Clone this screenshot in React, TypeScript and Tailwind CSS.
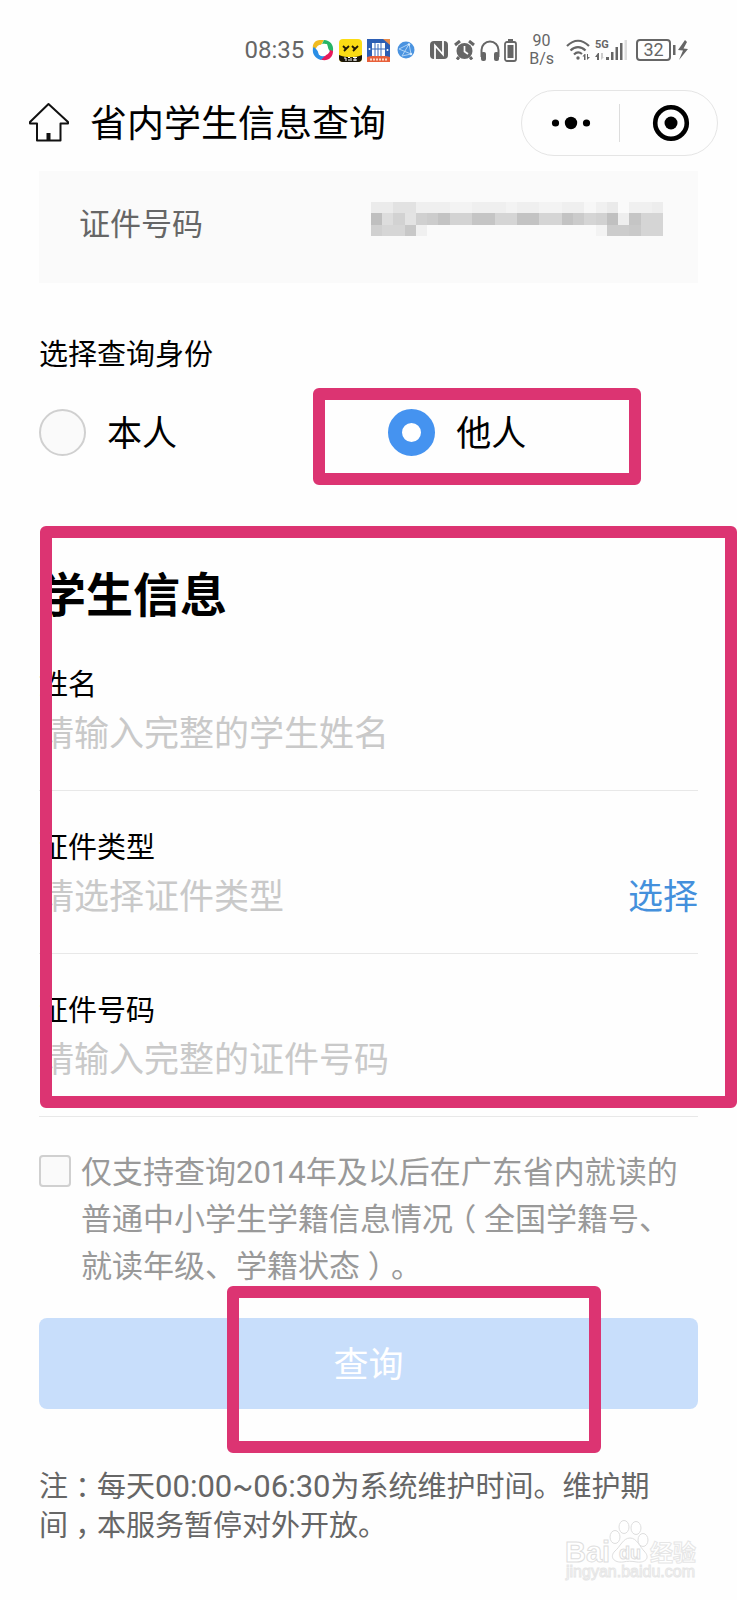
import { useState, type ReactNode } from "react";

const MASK_TOP = ["#ebebeb", "#ebebeb", "#e2e2e2", "#e2e2e2", "#efefef", "#efefef", "#efefef", "#f3f3f3", "#f3f3f3", "#efefef", "#efefef", "#efefef", "#f3f3f3", "#efefef", "#efefef", "#f3f3f3", "#f3f3f3", "#efefef", "#efefef", "#f7f7f7", "#f0f0f0", "#eaeaea", "#fafafa", "#f0f0f0", "#f0f0f0", "#ededed"];
const MASK_MIDDLE = ["#bfbfbf", "#dddddd", "#d2d2d2", "#e3e3e3", "#d0d0d0", "#cccccc", "#c3c3c3", "#d3d3d3", "#d3d3d3", "#c5c5c5", "#c5c5c5", "#d5d5d5", "#d5d5d5", "#c3c3c3", "#c3c3c3", "#d5d5d5", "#d5d5d5", "#c3c3c3", "#cbcbcb", "#d5d5d5", "#d1d1d1", "#c0c0c0", "#eeeeee", "#c5c5c5", "#d5d5d5", "#d5d5d5"];
const MASK_BOTTOM = ["#d0d0d0", "#d6d6d6", "#d6d6d6", "#c8c8c8", "#f0f0f0", "#fafafa", "#fafafa", "#fafafa", "#fafafa", "#fafafa", "#fafafa", "#fafafa", "#fafafa", "#fafafa", "#fafafa", "#fafafa", "#fafafa", "#fafafa", "#fafafa", "#fafafa", "#f3f3f3", "#cccccc", "#cccccc", "#c9c9c9", "#d5d5d5", "#d5d5d5"];

function MaskedNumber() {
  return (
    <svg className="mb-3" width="292" height="34" viewBox="0 0 260 30" preserveAspectRatio="none" shapeRendering="crispEdges" role="img" aria-label="证件号码">
      {[MASK_TOP, MASK_MIDDLE, MASK_BOTTOM].map((row, y) =>
        row.map((fill, x) => <rect key={`${x}-${y}`} x={x * 10} y={y * 10} width="10" height="10" fill={fill} />),
      )}
    </svg>
  );
}

function AppIcons() {
  return (
    <div className="flex items-center gap-[5px]">
      <svg width="22" height="22" viewBox="0 0 22 22">
        <path d="M1 10C0 5 3 1 8 1H12L9 6C5 6 4 9 3 12Z" fill="#f0bb21" />
        <path d="M12 1C18 1 22 6 21 12L20 14L15 9C16 6 14 4 10 5Z" fill="#27b566" />
        <path d="M21 12C21 18 17 22 10 21L8 20L14 16C17 15 18 12 18 11Z" fill="#e8195a" />
        <path d="M9 21C3 19 0 15 1 9L2 8L7 13C7 17 9 18 13 17Z" fill="#2a8ee6" />
        <path d="M7 6L15 5L17 12L13 17L7 16L5 10Z" fill="#fff" />
      </svg>
      <svg width="23" height="23" viewBox="0 0 23 23">
        <rect width="23" height="23" rx="4" fill="#fbdc14" />
        <path d="M0 16C7 19 16 19 23 16V19A4 4 0 0 1 19 23H4A4 4 0 0 1 0 19Z" fill="#1b1608" />
        <path d="M4 7L7 10L10 7M7 10L5 12M13 7L16 10L19 7M16 10L14 12" fill="none" stroke="#221a05" strokeWidth="1.8" />
        <path d="M5 19h2v3M9 18.500h2M9 21h2M12 19v3M14 18.500h4M14 21h4M16 18v4" fill="none" stroke="#fff" strokeWidth="1" />
      </svg>
      <svg width="23" height="23" viewBox="0 0 23 23">
        <rect width="23" height="23" fill="#2d5fb4" />
        <path d="M16 0H23V6Z" fill="#e78a4a" />
        <path d="M0 18C8 16 15 16 23 18V23H0Z" fill="#e8603a" />
        <rect x="5" y="4" width="13" height="13" fill="#fff" />
        <path d="M8 4v13M11 5v12M14 4v13M5 10h13" stroke="#3b6abb" strokeWidth="1" />
        <circle cx="2.500" cy="10" r="1" fill="#fff" />
        <circle cx="20.500" cy="11" r="1" fill="#fff" />
        <path d="M3 20.500h17" stroke="#fbd9c8" strokeWidth="2" strokeDasharray="2 1" />
      </svg>
      <svg width="20" height="18" viewBox="0 0 20 18">
        <circle cx="11" cy="9" r="8.500" fill="#4a93e0" />
        <path d="M4 8L14 3L16 13L4 8ZM14 3L7 15L16 13" fill="none" stroke="#b7d8f7" strokeWidth="0.900" />
        <circle cx="14" cy="3.500" r="1.200" fill="#d9ecfc" />
        <circle cx="16" cy="13" r="1.200" fill="#d9ecfc" />
      </svg>
    </div>
  );
}

function SystemIcons() {
  return (
    <div className="flex items-center gap-1">
      <svg width="20" height="20" viewBox="0 0 20 20">
        <rect x="1" y="1" width="18" height="18" rx="4" fill="#666" />
        <path d="M6 19V5.500L14 14.500V1" fill="none" stroke="#fff" strokeWidth="1.800" />
      </svg>
      <svg width="23" height="20" viewBox="0 0 23 20">
        <circle cx="11.500" cy="11" r="8" fill="#666" />
        <path d="M2 5L7 1M21 5L16 1M6 17L4 19.500M17 17L19 19.500" stroke="#666" strokeWidth="3" />
        <path d="M11.500 6V11.500L15 14" fill="none" stroke="#fff" strokeWidth="1.700" />
      </svg>
      <svg width="20" height="21" viewBox="0 0 20 21">
        <path d="M1.500 17V10A8.500 8.500 0 0 1 18.500 10V17" fill="none" stroke="#666" strokeWidth="2" />
        <rect x="1" y="12" width="5" height="9" rx="2" fill="#666" />
        <rect x="14" y="12" width="5" height="9" rx="2" fill="#666" />
      </svg>
      <svg width="13" height="23" viewBox="0 0 13 23">
        <path d="M4 1H9" stroke="#666" strokeWidth="2" />
        <rect x="1" y="3" width="11" height="19" rx="2" fill="none" stroke="#666" strokeWidth="1.800" />
        <rect x="3.500" y="6" width="6" height="13" fill="#666" />
      </svg>
    </div>
  );
}

function SignalIcons() {
  return (
    <div className="flex items-center gap-1">
      <svg width="25" height="22" viewBox="0 0 25 22" fill="none" stroke="#666" strokeWidth="2.200">
        <path d="M1 7C8 0 16 0 23 7M4.500 11.500C9 7 15 7 19.500 11.500M8 15.500C10.500 13 13.500 13 16 15" />
        <circle cx="12" cy="19" r="1.700" fill="#666" stroke="none" />
        <path d="M18.500 15L16.500 17.500H18V21H19.500V15ZM21 15V21L24 18H22V15Z" fill="#666" stroke="none" />
      </svg>
      <div className="flex items-end">
        <div className="flex flex-col gap-1">
          <span className="text-[11px] leading-[9px] font-bold">5G</span>
          <svg width="16" height="8" viewBox="0 0 16 8" fill="#666">
            <path d="M3 0L0 4H2V7H4V0Z" />
            <path d="M6 0V7L9 4H8V0Z" fill="#ccc" />
            <rect x="11" y="4" width="3" height="3" />
          </svg>
        </div>
        <svg width="17" height="22" viewBox="0 0 17 22" fill="#666">
          <rect x="0" y="13" width="2.500" height="8" />
          <rect x="4.500" y="8" width="2.500" height="13" />
          <rect x="9" y="4" width="2.500" height="17" />
          <rect x="13.500" y="1" width="2.500" height="20" fill="#ddd" />
        </svg>
      </div>
    </div>
  );
}

function BatteryLevel() {
  return (
    <div className="ml-2 flex items-center">
      <span className="flex h-[22px] w-[35px] items-center justify-center rounded border-2 border-[#666] text-lg leading-none">32</span>
      <svg width="18" height="22" viewBox="0 0 18 22" fill="#666">
        <rect x="2" y="6" width="2.500" height="10" />
        <path d="M14 1L7 11L12 11.500L8 21L17 10L12.500 9.500L16 3Z" />
      </svg>
    </div>
  );
}

function StatusBar() {
  return (
    <div className="flex h-[90px] items-center justify-end pt-2.5 pr-12 text-[#666]">
      <span className="mr-2 text-2xl leading-none">08:35</span>
      <AppIcons />
      <div className="ml-3.5">
        <SystemIcons />
      </div>
      <div className="mx-3 text-center text-base leading-[18px]">
        90
        <br />
        B/s
      </div>
      <SignalIcons />
      <BatteryLevel />
    </div>
  );
}

function TopBar() {
  return (
    <header className="flex items-center pr-[19px] pl-7">
      <a href="#home" aria-label="首页">
        <svg width="42" height="42" viewBox="0 0 42 42" fill="none" stroke="#111" strokeWidth="2">
          <path d="M20.500 2L2 20V21.500H9V38.500H32.500V21.500H40V20L20.500 2Z" strokeLinejoin="round" />
          <path d="M20.500 38V31" strokeWidth="4" />
        </svg>
      </a>
      <h1 className="ml-5 pt-1 text-[37px] leading-[50px]">省内学生信息查询</h1>
      <div className="ml-auto flex h-[66px] w-[197px] items-center rounded-full border border-[#e5e5e5]">
        <button type="button" aria-label="更多" className="flex w-[97px] justify-center">
          <svg width="40" height="14" viewBox="0 0 40 14">
            <circle cx="4.500" cy="7" r="3.600" />
            <circle cx="20" cy="7" r="6.200" />
            <circle cx="35.500" cy="7" r="3.600" />
          </svg>
        </button>
        <span className="h-[38px] w-px bg-[#ddd]" />
        <button type="button" aria-label="关闭" className="flex flex-1 justify-center pl-1">
          <svg width="38" height="38" viewBox="0 0 38 38">
            <circle cx="19" cy="19" r="15.800" fill="none" stroke="#000" strokeWidth="4.600" />
            <circle cx="19" cy="19" r="6.500" />
          </svg>
        </button>
      </div>
    </header>
  );
}

// Full-width marks that sit in the middle of their box
function Mark({ children }: { children: ReactNode }) {
  return <span className="inline-block w-[1em] text-center leading-none [font-feature-settings:'halt']">{children}</span>;
}

function Highlight({ className }: { className: string }) {
  return <span aria-hidden="true" className={`pointer-events-none absolute rounded-md border-12 border-[#dc3472] ${className}`} />;
}

type IdentityOptionProps = {
  value: string;
  label: string;
  checked: boolean;
  onSelect: (value: string) => void;
};

function IdentityOption({ value, label, checked, onSelect }: IdentityOptionProps) {
  return (
    <label className="flex h-12 items-center gap-[21px] text-[35px] leading-[42px]">
      <input
        type="radio"
        name="identity"
        value={value}
        checked={checked}
        onChange={() => onSelect(value)}
        className="size-[47px] appearance-none rounded-full border-2 border-[#d0d0d0] bg-[#fafafa] checked:border-14 checked:border-[#4593f0] checked:bg-white"
      />
      <span className="pt-1.5">{label}</span>
    </label>
  );
}

type FieldProps = {
  id: string;
  label: string;
  placeholder: string;
  readOnly?: boolean;
  action?: ReactNode;
};

function Field({ id, label, placeholder, readOnly, action }: FieldProps) {
  return (
    <div className="border-b border-[#e8e8e8] pt-[37px] pb-[31px]">
      <label htmlFor={id} className="block text-[29px] leading-10">
        {label}
      </label>
      <div className="mt-1 flex h-[50px] items-center text-[35px]">
        <input id={id} type="text" placeholder={placeholder} readOnly={readOnly} className="h-full min-w-0 flex-1 outline-none placeholder:text-[#c9c9c9]" />
        {action}
      </div>
    </div>
  );
}

function Watermark() {
  return (
    <svg className="pointer-events-none absolute right-9 bottom-4 font-['Liberation_Sans','Noto_Sans_CJK_SC',sans-serif]" width="138" height="68" viewBox="0 0 138 68" fill="#fff" stroke="#dedede" strokeWidth="1">
      <text x="2" y="46" fontSize="29" fontWeight="700">
        Bai
      </text>
      <path d="M67 22C74 22 77 31 81 35C88 42 82 47 74 46C68 45 65 45 60 46C51 47 46 41 52 35C57 31 60 22 67 22Z" />
      <ellipse cx="52" cy="21" rx="5" ry="6.500" />
      <ellipse cx="61" cy="11" rx="5" ry="6.500" />
      <ellipse cx="73" cy="12" rx="5" ry="6.500" />
      <ellipse cx="80" cy="24" rx="5" ry="6.500" />
      <text x="56" y="43" fontSize="18" fontWeight="700">
        du
      </text>
      <text x="87" y="45" fontSize="23" fontWeight="700" stroke="#e6e6e6">
        经验
      </text>
      <text x="3" y="61" fontSize="16" stroke="#e6e6e6">
        jingyan.baidu.com
      </text>
    </svg>
  );
}

export default function App() {
  const [identity, setIdentity] = useState("other");
  const [agreed, setAgreed] = useState(false);

  return (
    <div className="relative min-h-screen overflow-x-hidden bg-[#fefefe] font-['Roboto','Noto_Sans_CJK_SC',sans-serif] text-black">
      <StatusBar />
      <TopBar />

      <main className="px-[39px] pb-[54px]">
        <div className="mt-[15px] flex h-28 items-center justify-between bg-[#fafafa] pr-[35px] pb-1 pl-10">
          <span className="text-[31px] leading-10 text-[#666]">证件号码</span>
          <MaskedNumber />
        </div>

        <fieldset>
          <legend className="pt-[52px] text-[29px] leading-10">选择查询身份</legend>
          <div className="mt-[33px] flex">
            <div className="w-[53%]">
              <IdentityOption value="self" label="本人" checked={identity === "self"} onSelect={setIdentity} />
            </div>
            <div className="relative">
              <IdentityOption value="other" label="他人" checked={identity === "other"} onSelect={setIdentity} />
              <Highlight className="-top-5 -right-[115px] -bottom-[29px] -left-[75px]" />
            </div>
          </div>
        </fieldset>

        <section className="relative mt-[70px] pt-10">
          <h2 className="mb-0.5 text-[47px] leading-[60px] font-bold">学生信息</h2>
          <Field id="name" label="姓名" placeholder="请输入完整的学生姓名" />
          <Field
            id="id-type"
            label="证件类型"
            placeholder="请选择证件类型"
            readOnly
            action={
              <button type="button" className="pt-0.5 text-[#4490dc]">
                选择
              </button>
            }
          />
          <Field id="id-number" label="证件号码" placeholder="请输入完整的证件号码" />
          <Highlight className="top-0 -right-[39px] bottom-[9px] left-px" />
        </section>

        <label className="mt-8 flex items-start gap-2.5 text-[31px] leading-[47px] text-[#999]">
          <input
            type="checkbox"
            checked={agreed}
            onChange={(event) => setAgreed(event.target.checked)}
            className="mt-1.5 size-8 shrink-0 appearance-none rounded-sm border-2 border-[#d0d0d0] bg-[#fafafa] checked:bg-[#4593f0]"
          />
          <span>
            仅支持查询2014年及以后在广东省内就读的普通中小学生学籍信息情况<Mark>（</Mark>全国学籍号、就读年级、学籍状态<Mark>）</Mark>。
          </span>
        </label>

        <div className="relative mt-7">
          <button type="button" className="block h-[91px] w-full rounded-lg bg-[#c8defb] pt-1.5 text-[35px] text-white">
            查询
          </button>
          <Highlight className="-top-8 right-[97px] -bottom-11 left-[188px]" />
        </div>

        <p className="mt-[59px] text-[29px] leading-[39px] text-[#666]">
          注<Mark>：</Mark>每天<span className="text-[31px] leading-none">00:00~06:30</span>为系统维护时间。维护期
          <span className="whitespace-nowrap">
            间<Mark>，</Mark>本
          </span>
          服务暂停对外开放。
        </p>
      </main>

      <Watermark />
    </div>
  );
}
